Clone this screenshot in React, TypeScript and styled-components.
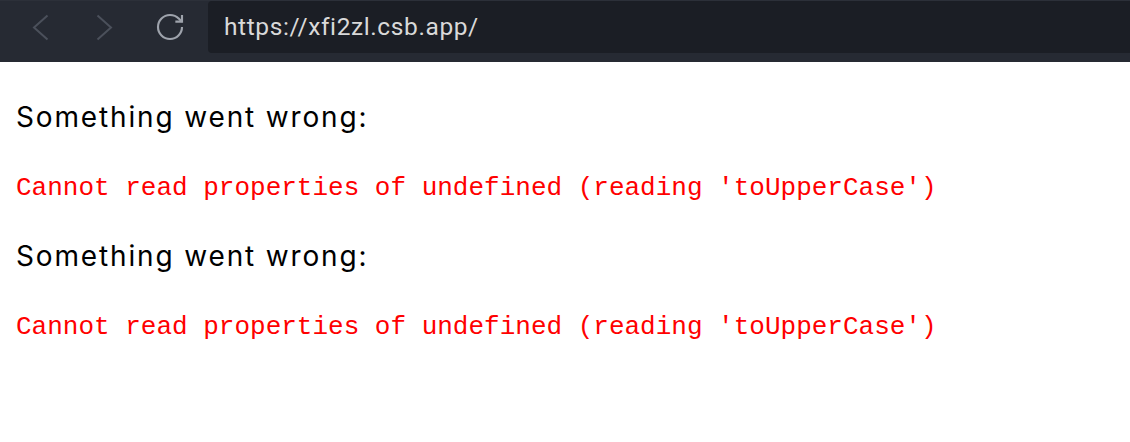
import React from "react";
import styled, { createGlobalStyle } from "styled-components";

const Global = createGlobalStyle`
  html, body { margin: 0; padding: 0; background: #ffffff; }
  body { font-family: "Liberation Sans", Arial, sans-serif; }
`;

const Page = styled.div`
  width: 1130px;
  height: 442px;
  display: flex;
  flex-direction: column;
  background: #ffffff;
  overflow: hidden;
`;

const Toolbar = styled.div`
  height: 62px;
  flex: 0 0 62px;
  display: flex;
  align-items: flex-start;
  background: #262a33;
  border-top: 1px solid #2c3039;
  box-sizing: border-box;
  padding-left: 8px;
`;

const NavButton = styled.div<{ $w?: number; $pr?: number }>`
  width: ${(p) => p.$w ?? 64}px;
  height: 52px;
  display: flex;
  align-items: center;
  justify-content: ${(p) => (p.$pr ? "flex-end" : "center")};
  padding-right: ${(p) => p.$pr ?? 0}px;
  box-sizing: border-box;
  color: ${(p) => (p.$pr ? "#9ea3ac" : "#4b505b")};
`;

const UrlBox = styled.div`
  flex: 1;
  height: 52px;
  margin-left: 4px;
  background: #1b1e25;
  border-radius: 4px 0 0 4px;
  display: flex;
  align-items: center;
  padding-left: 16px;
  padding-bottom: 2px;
  box-sizing: border-box;
  font-family: Roboto, "Liberation Sans", sans-serif;
  font-size: 24.5px;
  letter-spacing: 0.6px;
  color: #d9d9d9;
`;

const Content = styled.div`
  padding: 35px 16px 0;
  display: flex;
  flex-direction: column;
  gap: 33px;
`;

const ErrorBlock = styled.div`
  display: flex;
  flex-direction: column;
  gap: 36px;
`;

const Heading = styled.div`
  font-family: Inter, "Liberation Sans", sans-serif;
  font-size: 28px;
  letter-spacing: 1.85px;
  line-height: 40px;
  color: #000000;
  height: 40px;
`;

const Message = styled.div`
  font-family: "Liberation Mono", "Courier New", monospace;
  font-size: 26px;
  line-height: 30px;
  height: 30px;
  color: #ff0000;
  white-space: pre;
`;

const Chevron = ({ dir }: { dir: "left" | "right" }) => (
  <svg width="17" height="27" viewBox="0 0 17 27" fill="none">
    <polyline
      points={dir === "left" ? "15.5,1.5 2,13.5 15.5,25.5" : "1.5,1.5 15,13.5 1.5,25.5"}
      stroke="currentColor"
      strokeWidth="2"
      strokeLinecap="butt"
      strokeLinejoin="miter"
    />
  </svg>
);

const Reload = () => (
  <svg width="32" height="32" viewBox="0 0 24 24" fill="none" stroke="currentColor" strokeWidth="1.6" strokeLinecap="butt" strokeLinejoin="miter">
    <path d="M21 12a9 9 0 1 1-9-9c2.52 0 4.93 1 6.74 2.74L21 8" />
    <path d="M21 3v5h-5" />
  </svg>
);

const ErrorItem = () => (
  <ErrorBlock>
    <Heading>Something went wrong:</Heading>
    <Message>Cannot read properties of undefined (reading 'toUpperCase')</Message>
  </ErrorBlock>
);

export default function App() {
  return (
    <Page>
      <Global />
      <Toolbar>
        <NavButton>
          <Chevron dir="left" />
        </NavButton>
        <NavButton>
          <Chevron dir="right" />
        </NavButton>
        <NavButton $w={68} $pr={18}>
          <Reload />
        </NavButton>
        <UrlBox>https://xfi2zl.csb.app/</UrlBox>
      </Toolbar>
      <Content>
        <ErrorItem />
        <ErrorItem />
      </Content>
    </Page>
  );
}
